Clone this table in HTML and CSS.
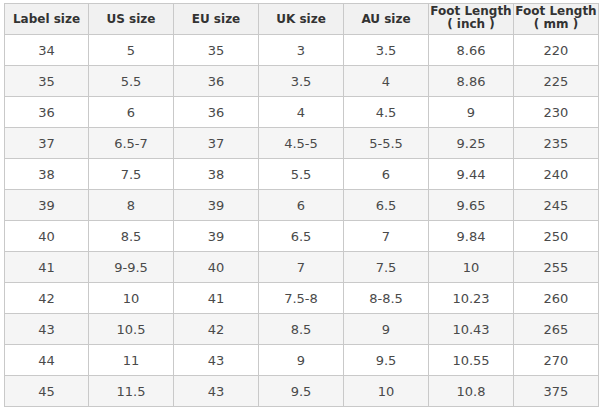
FILE: index.html
```html
<!DOCTYPE html>
<html>
<head>
<meta charset="utf-8">
<link rel="stylesheet" href="styles.css">
</head>
<body>
<table class="size-table">
  <colgroup>
    <col class="c-first"><col class="c"><col class="c"><col class="c"><col class="c"><col class="c"><col class="c">
  </colgroup>
  <thead>
    <tr class="head">
      <th>Label size</th><th>US size</th><th>EU size</th><th>UK size</th><th>AU size</th>
      <th class="two">Foot Length<br>( inch )</th><th class="two">Foot Length<br>( mm )</th>
    </tr>
  </thead>
  <tbody>
    <tr><td>34</td><td>5</td><td>35</td><td>3</td><td>3.5</td><td>8.66</td><td>220</td></tr>
    <tr class="alt"><td>35</td><td>5.5</td><td>36</td><td>3.5</td><td>4</td><td>8.86</td><td>225</td></tr>
    <tr><td>36</td><td>6</td><td>36</td><td>4</td><td>4.5</td><td>9</td><td>230</td></tr>
    <tr class="alt"><td>37</td><td>6.5-7</td><td>37</td><td>4.5-5</td><td>5-5.5</td><td>9.25</td><td>235</td></tr>
    <tr><td>38</td><td>7.5</td><td>38</td><td>5.5</td><td>6</td><td>9.44</td><td>240</td></tr>
    <tr class="alt"><td>39</td><td>8</td><td>39</td><td>6</td><td>6.5</td><td>9.65</td><td>245</td></tr>
    <tr><td>40</td><td>8.5</td><td>39</td><td>6.5</td><td>7</td><td>9.84</td><td>250</td></tr>
    <tr class="alt"><td>41</td><td>9-9.5</td><td>40</td><td>7</td><td>7.5</td><td>10</td><td>255</td></tr>
    <tr><td>42</td><td>10</td><td>41</td><td>7.5-8</td><td>8-8.5</td><td>10.23</td><td>260</td></tr>
    <tr class="alt"><td>43</td><td>10.5</td><td>42</td><td>8.5</td><td>9</td><td>10.43</td><td>265</td></tr>
    <tr><td>44</td><td>11</td><td>43</td><td>9</td><td>9.5</td><td>10.55</td><td>270</td></tr>
    <tr class="alt"><td>45</td><td>11.5</td><td>43</td><td>9.5</td><td>10</td><td>10.8</td><td>375</td></tr>
  </tbody>
</table>
</body>
</html>
```
FILE: styles.css
```css
html, body {
  margin: 0;
  padding: 0;
  background: #ffffff;
}
body {
  padding: 3px 0 0 4px;
}
.size-table {
  border-collapse: collapse;
  table-layout: fixed;
  width: 595px;
  font-family: "DejaVu Sans", Verdana, sans-serif;
}
.c-first { width: 84px; }
.c { width: 85px; }
.size-table th,
.size-table td {
  border: 1px solid #c9c9c9;
  text-align: center;
  vertical-align: middle;
  padding: 0;
}
.size-table th {
  height: 29px;
  background: #f1f1f1;
  color: #333333;
  font-size: 12px;
  font-weight: bold;
  line-height: 13px;
}
.size-table th.two {
  vertical-align: top;
  padding-top: 1px;
}
.size-table td {
  height: 30px;
  font-size: 13px;
  color: #4a4a4a;
  background: #ffffff;
}
.size-table tr.alt td {
  background: #f5f5f5;
}
```
